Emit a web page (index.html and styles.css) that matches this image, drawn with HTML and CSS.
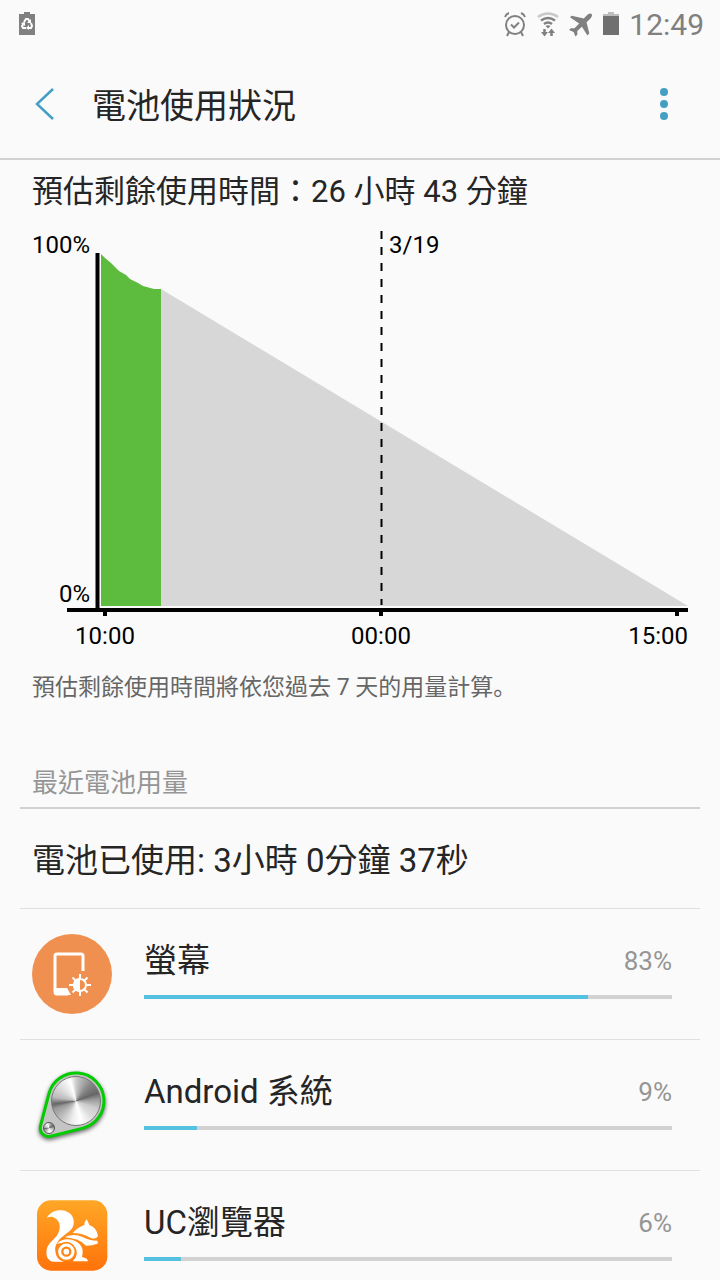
FILE: index.html
```html
<!DOCTYPE html>
<html lang="zh-Hant">
<head>
    <meta charset="UTF-8">
    <meta name="viewport" content="width=device-width, initial-scale=1.0">
    <title>電池使用狀況</title>
    <link rel="stylesheet" href="styles.css">
</head>
<body>
    <div class="status-bar">
        <svg class="status-saver" width="18" height="26" viewBox="0 0 18 26">
            <path d="M1 2h5V0h6v2h5v21H1z" fill="#808080"/>
            <g fill="none" stroke="#fff" stroke-width="2">
                <path d="M6 10l2-3h2l2 3M13 11l1 3-1 2h-3M8 16H5l-1-2 2-3"/>
            </g>
            <path d="M13 7v4H9zM11 13v5l-3-2zM3 11l4-1v4z" fill="#fff"/>
        </svg>
        <div class="status-right">
            <svg width="24" height="26" viewBox="0 0 24 26" fill="none" stroke="#808080" stroke-width="2">
                <circle cx="12" cy="13" r="9"/>
                <path d="M8 12.500l3 3 5-5M6 20l-2 4M18 20l2 4M2 5q1-3 4-4M22 5q-1-3-4-4"/>
            </svg>
            <svg width="24" height="26" viewBox="0 0 24 26" fill="none" stroke="#808080" stroke-width="2">
                <path d="M2 5q10-7 20 0" stroke="#c8c8c8" stroke-width="2.500"/>
                <path d="M5 8.500q7-5 14 0M8 12q4-3 8 0" stroke-width="2.500"/>
                <path d="M9.500 14q2.500-1.500 5 0L12 16.500z" fill="#808080" stroke="none"/>
                <path d="M8.500 17v5M15.500 24v-5" stroke-width="2.500"/>
                <path d="M5 20h7l-3.500 4.500zM12 21h7l-3.500-4.500z" fill="#808080" stroke="none"/>
            </svg>
            <svg width="24" height="26" viewBox="0 0 26 26" fill="#808080">
                <path d="M24.500 1.200q1.400 2-1.500 5L19 10l3 12-2 2.500-6-9.500-5 4.500v4L7 25.500l-2-5-5-2L2 16.500h4l5-5L1 4.500 3 3l13 3 4-4q3-2.200 4.500-.8z"/>
            </svg>
            <svg width="18" height="26" viewBox="0 0 18 26">
                <path d="M1 2h5V0h6v2h5v4H1z" fill="#bdbdbd"/>
                <path d="M1 4h16v19H1z" fill="#707070"/>
            </svg>
            <span class="clock">12:49</span>
        </div>
    </div>

    <header class="app-bar">
        <button class="icon-button back" type="button" aria-label="返回">
            <svg width="20" height="34" viewBox="0 0 20 34" fill="none" stroke="#459fc2" stroke-width="2.500">
                <path d="M18 2L2 17l16 15"/>
            </svg>
        </button>
        <h1>電池使用狀況</h1>
        <button class="icon-button" type="button" aria-label="更多選項">
            <svg width="8" height="34" viewBox="0 0 8 34" fill="#459fc2">
                <circle cx="4" cy="5" r="4"/>
                <circle cx="4" cy="17" r="4"/>
                <circle cx="4" cy="29" r="4"/>
            </svg>
        </button>
    </header>

    <main>
        <section class="estimate">
            <h2>預估剩餘使用時間：26 小時 43 分鐘</h2>
            <svg class="chart" viewBox="0 0 720 444" role="img" aria-label="電量圖">
                <!-- remaining estimate -->
                <path d="M161 77L688 394H161z" fill="#d7d7d7"/>
                <!-- battery used so far -->
                <path d="M101 42l4 4 6 5 8 8 7 4 4 4 8 4 5 3 11 3h7v317h-60z" fill="#5dbb3e"/>
                <path d="M381.500 19v374" stroke="#000" stroke-width="2" stroke-dasharray="8 8"/>
                <path d="M97.500 41v355M67 398h621" stroke="#000" stroke-width="4"/>
                <path d="M105 400v4M381 400v4M677 400v4" stroke="#000" stroke-width="4"/>
                <g class="chart-text">
                    <text x="90" y="41" text-anchor="end">100%</text>
                    <text x="90" y="390" text-anchor="end">0%</text>
                    <text x="389" y="41">3/19</text>
                    <text x="105" y="432" text-anchor="middle">10:00</text>
                    <text x="381" y="432" text-anchor="middle">00:00</text>
                    <text x="688" y="432" text-anchor="end">15:00</text>
                </g>
            </svg>
            <p class="note">預估剩餘使用時間將依您過去 7 天的用量計算<span class="stop" lang="zh-Hans">。</span></p>
        </section>

        <section class="usage">
            <h3>最近電池用量</h3>
            <p class="total">電池已使用: 3小時 0分鐘 37秒</p>
            <ul>
                <li>
                    <svg class="app-icon" viewBox="0 0 80 80">
                        <circle cx="40" cy="40" r="40" fill="#f09050"/>
                        <path d="M51 37V22q0-2-2-2H25q-2 0-2 2v36q0 2 2 2h11" fill="none" stroke="#fff" stroke-width="3"/>
                        <path d="M23 54h12l4 7H26q-3 0-3-3z" fill="#fff"/>
                        <circle cx="48" cy="51" r="6" fill="none" stroke="#fff" stroke-width="2"/>
                        <path d="M48 44a7 7 0 0 0 0 14z" fill="#fff"/>
                        <path d="M48 40v4M48 58v4M37 51h4M55 51h4M40.500 43.500l3 3M52.500 55.500l3 3M55.500 43.500l-3 3M43.500 55.500l-3 3" stroke="#fff" stroke-width="2"/>
                    </svg>
                    <div class="app-info">
                        <div class="app-line"><span class="app-name">螢幕</span><span class="percent">83%</span></div>
                        <div class="bar"><div class="bar-fill" style="width: 84%"></div></div>
                    </div>
                </li>
                <li>
                    <div class="app-icon knob">
                        <svg viewBox="0 0 80 80">
                            <path class="knob-plate" d="M16.900 28.900A28 28 0 1 1 50.900 63.100L18.800 71.200A8.500 8.500 0 0 1 8.500 60.800z" fill="#c4c4c4" stroke="#0c0" stroke-width="3"/>
                        </svg>
                        <span class="dial dial-large"></span>
                        <span class="dial dial-small"></span>
                    </div>
                    <div class="app-info">
                        <div class="app-line"><span class="app-name">Android 系統</span><span class="percent">9%</span></div>
                        <div class="bar"><div class="bar-fill" style="width: 10%"></div></div>
                    </div>
                </li>
                <li>
                    <svg class="app-icon" viewBox="36 47 240 240">
                        <defs>
                            <linearGradient id="uc" x1="0" y1="0" x2="0" y2="1">
                                <stop offset="0" stop-color="#ffa726"/>
                                <stop offset="1" stop-color="#ff730a"/>
                            </linearGradient>
                        </defs>
                        <rect x="51" y="60" width="211" height="211" rx="42" fill="url(#uc)"/>
                        <g fill="#fff">
                            <path d="M80 113C90 95 108 88 126 90C152 93 164 112 161 131C159 147 143 157 131 166C112 180 104 196 106 212C108 230 116 239 132 244H102C84 243 77 228 80 208C83 188 104 178 114 160C124 142 120 118 100 111C92 108 86 110 80 113Z"/>
                            <path d="M158 158Q172 142 193 134Q194 122 200 117Q205 126 208 134Q232 143 234 168Q228 177 214 174Q188 158 158 158Z"/>
                            <path d="M134 171Q160 158 188 170Q207 181 232 181Q235 189 232 190Q211 197 198 196Q178 174 134 171Z"/>
                            <path d="M110 190Q130 172 158 179Q196 192 186 230Q203 233 204 243H158Q176 226 168 206Q152 182 110 190Z"/>
                        </g>
                        <circle cx="139" cy="214" r="27" fill="#fff" stroke="#ff8a18" stroke-width="5"/>
                        <circle cx="139" cy="214" r="12" fill="#fff" stroke="#ff8414" stroke-width="7"/>
                    </svg>
                    <div class="app-info">
                        <div class="app-line"><span class="app-name">UC瀏覽器</span><span class="percent">6%</span></div>
                        <div class="bar"><div class="bar-fill" style="width: 7%"></div></div>
                    </div>
                </li>
            </ul>
        </section>
    </main>
</body>
</html>
```
FILE: styles.css
```css
* { box-sizing: border-box; }
body {
    margin: 0;
    height: 100vh;
    display: flex;
    flex-direction: column;
    overflow: hidden;
    background-color: #fafafa;
    color: #252525;
    font-family: Roboto, "Noto Sans CJK TC", sans-serif;
}
h1, h2, h3, p, ul {
    margin: 0;
    padding: 0;
    font-weight: normal;
}
ul { list-style-type: none; }
svg { display: block; }

/* Status bar */
.status-bar {
    display: flex;
    flex: none;
    align-items: center;
    justify-content: space-between;
    height: 48px;
    padding: 2px 16px 0 18px;
}
.status-right {
    display: flex;
    align-items: center;
    gap: 9px;
}
.clock {
    color: #808080;
    font-size: 30px;
    line-height: 46px;
}

/* App bar */
.app-bar {
    display: flex;
    flex: none;
    align-items: center;
    height: 112px;
    padding: 2px 32px 0;
    border-bottom: 2px solid #d2d2d2;
}
.app-bar h1 {
    flex: 1;
    padding-top: 4px;
    font-size: 34px;
    line-height: 48px;
}
.icon-button {
    display: flex;
    align-items: center;
    justify-content: center;
    width: 48px;
    height: 48px;
    padding: 0;
    border: 0;
    background: none;
}
.icon-button.back {
    justify-content: flex-start;
    width: 60px;
    padding-left: 3px;
}

main {
    flex: 1;
    overflow-y: auto;
    scrollbar-width: none;
}
.estimate h2 {
    padding: 12px 32px 0;
    font-size: 31px;
    line-height: 40px;
}
.chart {
    width: 100%;
}
.chart-text {
    font-size: 24px;
    fill: #000;
}
.note {
    padding: 12px 32px 22px;
    color: #666;
    font-size: 23px;
    line-height: 34px;
}
.stop { font-family: "Noto Sans CJK SC", sans-serif; }

/* Usage list */
.usage {
    padding: 0 20px;
}
.usage h3 {
    padding: 36px 12px 4px;
    border-bottom: 2px solid #d2d2d2;
    color: #959595;
    font-size: 26px;
    line-height: 40px;
}
.total {
    padding: 28px 12px 23px;
    font-size: 33px;
    line-height: 48px;
}
.usage li {
    display: flex;
    align-items: center;
    gap: 32px;
    height: 131px;
    padding: 0 28px 0 12px;
    border-top: 1px solid #e0e0e0;
}
.app-icon {
    position: relative;
    flex: none;
    width: 80px;
    height: 80px;
}
.app-info {
    flex: 1;
    padding-bottom: 12px;
}
.app-line {
    display: flex;
    align-items: center;
    justify-content: space-between;
    padding-bottom: 10px;
    line-height: 48px;
}
.app-name { font-size: 33px; }
.percent {
    color: #959595;
    font-size: 26px;
}
.bar {
    height: 4px;
    background-color: #d2d2d2;
}
.bar-fill {
    height: 4px;
    background-color: #56c0e0;
}

/* Metal dials */
.knob-plate { filter: drop-shadow(0 2px 2px #666); }
.dial {
    position: absolute;
    border-radius: 50%;
    background: conic-gradient(#ccc, #888 40deg, #666 70deg, #999 85deg, #ccc 110deg, #ddd 135deg, #fff 165deg, #eee 190deg, #bbb 225deg, #999 250deg, #666 262deg, #bbb 280deg, #ddd 310deg, #fff 345deg, #ccc);
}
.dial-large {
    top: 11px;
    left: 19px;
    width: 50px;
    height: 50px;
    border: 1px solid #777;
}
.dial-small {
    top: 57px;
    left: 11px;
    width: 12px;
    height: 12px;
    border: 1px solid #555;
}
```
